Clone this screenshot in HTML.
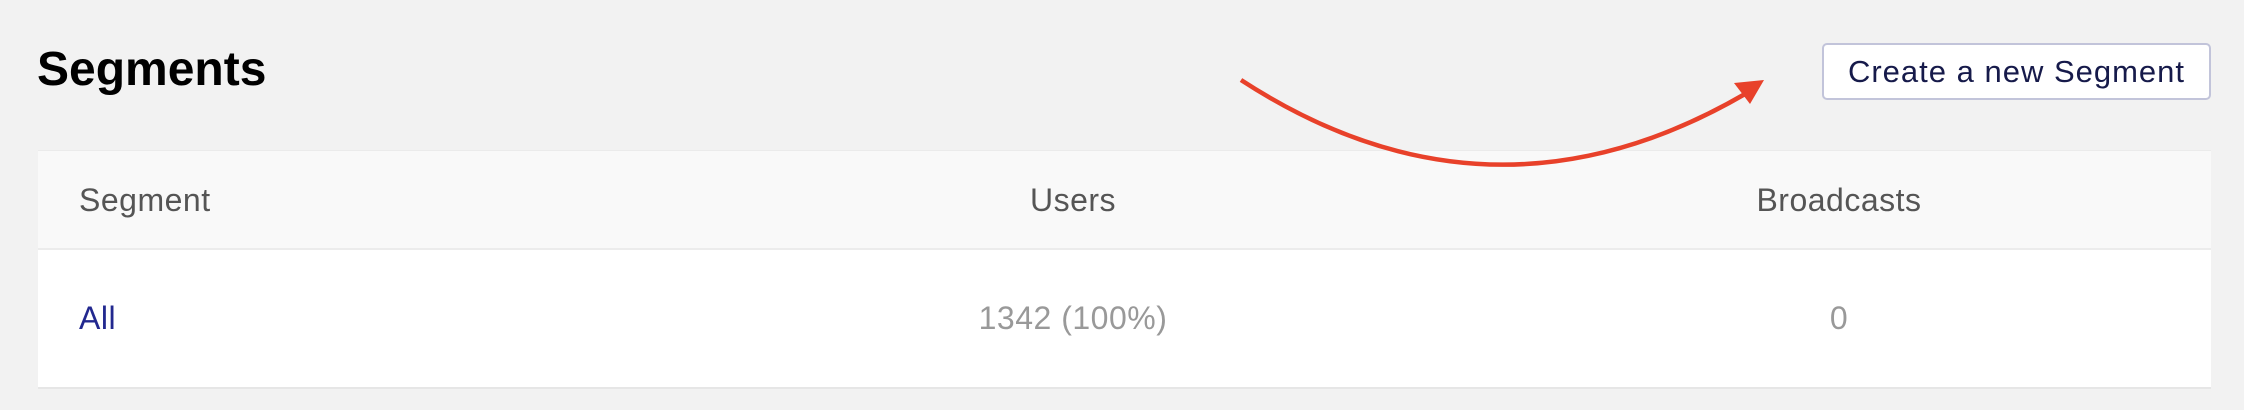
<!DOCTYPE html>
<html><head><meta charset="utf-8"><style>
html,body{margin:0;padding:0;}
body{width:2244px;height:410px;background:#f2f2f2;position:relative;overflow:hidden;font-family:"Liberation Sans",sans-serif;}
h1{position:absolute;left:37px;top:42px;margin:0;font-size:48px;font-weight:bold;color:#000;line-height:56px;}
.btn{position:absolute;left:1822px;top:43px;width:389px;height:57px;box-sizing:border-box;border:2px solid #c2c4da;border-radius:5px;background:#fff;color:#161a4a;font-size:31px;line-height:53px;text-align:center;letter-spacing:1px;}
.card{position:absolute;left:38px;top:151px;width:2173px;height:236px;background:#fff;box-shadow:0 2px 0 #e6e6e6, 0 -1px 0 #ebebeb;}
.head{position:absolute;left:0;top:0;width:100%;height:97px;background:#f9f9f9;border-bottom:2px solid #ececec;}
.t{position:absolute;font-size:32px;line-height:40px;letter-spacing:0.5px;}
svg{position:absolute;left:0;top:0;z-index:5}
</style></head><body>
<h1>Segments</h1>
<div class="btn">Create a new Segment</div>
<div class="card">
<div class="head"></div>
<div class="t" style="left:41px;top:29px;color:#555">Segment</div>
<div class="t" style="left:935px;width:200px;text-align:center;top:29px;color:#555">Users</div>
<div class="t" style="left:1701px;width:200px;text-align:center;top:29px;color:#555">Broadcasts</div>
<div class="t" style="left:41px;top:147px;color:#22288f">All</div>
<div class="t" style="left:885px;width:300px;text-align:center;top:147px;color:#999">1342 (100%)</div>
<div class="t" style="left:1701px;width:200px;text-align:center;top:147px;color:#999">0</div>
</div>
<svg width="2244" height="410">
<path d="M1241 80 Q1490 242 1745 94" fill="none" stroke="#e8412a" stroke-width="4.5"/>
<polygon points="1764,80 1734,83 1750,104" fill="#e8412a"/>
</svg>
</body></html>
